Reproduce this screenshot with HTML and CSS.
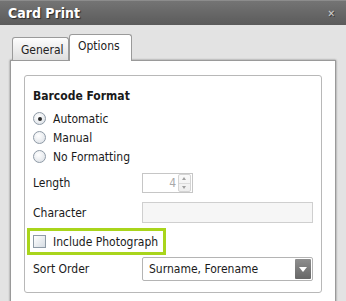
FILE: index.html
```html
<!DOCTYPE html>
<html lang="en">
<head>
  <meta charset="UTF-8" />
  <title>Card Print</title>
  <link rel="stylesheet" href="styles.css">
</head>
<body>
  <div class="titlebar">
    <span class="title">Card Print</span>
    <span class="close">&#x2715;</span>
  </div>

  <div class="dialog">
    <div class="tabs">
      <div class="tab">General</div>
      <div class="tab active">Options</div>
    </div>

    <div class="panel">
      <div class="group">
        <div class="heading">Barcode Format</div>

        <label class="radio-row"><span class="radio checked"></span>Automatic</label>
        <label class="radio-row"><span class="radio"></span>Manual</label>
        <label class="radio-row"><span class="radio"></span>No Formatting</label>

        <div class="field-row length-row">
          <span class="label">Length</span>
          <div class="spinner">
            <span class="spin-value">4</span>
            <span class="spin-buttons">
              <span class="spin-up"></span>
              <span class="spin-down"></span>
            </span>
          </div>
        </div>

        <div class="field-row char-row">
          <span class="label">Character</span>
          <div class="text-input"></div>
        </div>

        <div class="highlight">
          <span class="checkbox"></span>Include Photograph
        </div>

        <div class="field-row sort-row">
          <span class="label">Sort Order</span>
          <div class="select">
            <span class="select-value">Surname, Forename</span>
            <span class="select-button"></span>
          </div>
        </div>
      </div>
    </div>
  </div>
</body>
</html>
```

FILE: styles.css
```css
:root {
  --window-bg: #e3e3e3;
  --panel-border: #9a9a9a;
  --group-border: #b8b8b8;
  --input-border: #c6c6c6;
  --text: #1a1a1a;
  --lime: #a9d51c;
}

body {
  margin: 0;
  background: var(--window-bg);
  font-family: "DejaVu Sans Condensed", "DejaVu Sans", sans-serif;
  font-size: 12px;
  color: var(--text);
  overflow: hidden;
  white-space: nowrap;
}

.titlebar {
  height: 25px;
  box-sizing: border-box;
  border-top: 1px solid #8c8c8c;
  background: linear-gradient(#747474, #5b5b5b);
  display: flex;
  align-items: center;
  justify-content: space-between;
  padding: 0 11px 0 8px;
}

.title {
  color: #fff;
  font-weight: bold;
  font-size: 14px;
  text-shadow: 1px 1px 1px #2a2a2a;
}

.close {
  color: #cfcfcf;
  font-size: 10px;
  text-shadow: 1px 1px 0 #3a3a3a;
}

.dialog {
  padding: 10px 10px 0;
}

.tabs {
  display: flex;
  align-items: flex-end;
  height: 25px;
  padding-left: 2px;
}

.tab {
  width: 57px;
  height: 23px;
  box-sizing: border-box;
  padding: 5px 0 0 8px;
  border: 1px solid var(--panel-border);
  border-bottom: none;
  border-radius: 3px 3px 0 0;
  background: linear-gradient(#fdfdfd, #dedede);
  color: #222;
}

.tab.active {
  width: 63px;
  height: 27px;
  margin-bottom: -1px;
  padding: 4px 0 0 8px;
  background: #fff;
  position: relative;
  z-index: 1;
}

.panel {
  background: #fff;
  border: 1px solid var(--panel-border);
  box-shadow: 0 0 2px rgba(0, 0, 0, 0.45);
  padding: 14px 13px 20px;
}

.group {
  border: 1px solid var(--group-border);
  border-radius: 3px;
  padding: 12px 8px 11px;
}

.heading {
  font-weight: bold;
  font-size: 12px;
  line-height: 16px;
  margin-bottom: 5px;
}

.radio-row {
  display: flex;
  align-items: center;
  height: 19px;
  gap: 7px;
}

.radio {
  width: 11px;
  height: 11px;
  border: 1px solid #8e9aa6;
  border-radius: 50%;
  background: radial-gradient(circle at 40% 35%, #ffffff, #d8dde3);
  position: relative;
}

.radio.checked::after {
  content: "";
  position: absolute;
  left: 3.5px;
  top: 3.5px;
  width: 4px;
  height: 4px;
  border-radius: 50%;
  background: #2a2a2a;
}

.field-row {
  display: flex;
  align-items: center;
}

.label {
  width: 109px;
  flex: none;
}

.length-row {
  margin-top: 7px;
  height: 20px;
}

.spinner {
  width: 51px;
  height: 20px;
  box-sizing: border-box;
  border: 1px solid var(--input-border);
  display: flex;
  align-items: center;
  justify-content: flex-end;
  padding-right: 1px;
}

.spin-value {
  color: #a8a8a8;
  margin-right: 2px;
}

.spin-buttons {
  display: flex;
  flex-direction: column;
  width: 11px;
  height: 16px;
  border: 1px solid #d4d4d4;
  border-radius: 2px;
  background: linear-gradient(#fafafa, #eeeeee);
}

.spin-up,
.spin-down {
  flex: 1;
  position: relative;
}

.spin-up {
  border-bottom: 1px solid #dcdcdc;
}

.spin-up::after,
.spin-down::after {
  content: "";
  position: absolute;
  left: 3px;
  top: 2px;
  border-left: 2.5px solid transparent;
  border-right: 2.5px solid transparent;
}

.spin-up::after {
  border-bottom: 3px solid #a0a0a0;
}

.spin-down::after {
  border-top: 3px solid #a0a0a0;
}

.char-row {
  margin-top: 9px;
  height: 21px;
}

.text-input {
  flex: 1;
  height: 21px;
  box-sizing: border-box;
  border: 1px solid #cfcfcf;
  background: #f6f6f6;
}

.highlight {
  margin: 5px 0 0 -6px;
  width: 139px;
  height: 27px;
  box-sizing: border-box;
  border: 3px solid var(--lime);
  display: flex;
  align-items: center;
  gap: 7px;
  padding-left: 3px;
}

.checkbox {
  width: 11px;
  height: 11px;
  border: 1px solid #8e9aa6;
  background: linear-gradient(135deg, #ffffff, #d6dce3);
}

.sort-row {
  margin-top: 2px;
  height: 24px;
}

.select {
  flex: 1;
  height: 24px;
  box-sizing: border-box;
  border: 1px solid #b4b4b4;
  border-radius: 2px;
  display: flex;
  align-items: center;
  justify-content: space-between;
  padding: 1px;
}

.select-value {
  padding-left: 5px;
}

.select-button {
  width: 16px;
  height: 20px;
  border-radius: 1px;
  background: linear-gradient(#8e8e8e, #676767);
  position: relative;
}

.select-button::after {
  content: "";
  position: absolute;
  left: 4px;
  top: 8px;
  border-left: 4px solid transparent;
  border-right: 4px solid transparent;
  border-top: 5px solid #fff;
}
```
